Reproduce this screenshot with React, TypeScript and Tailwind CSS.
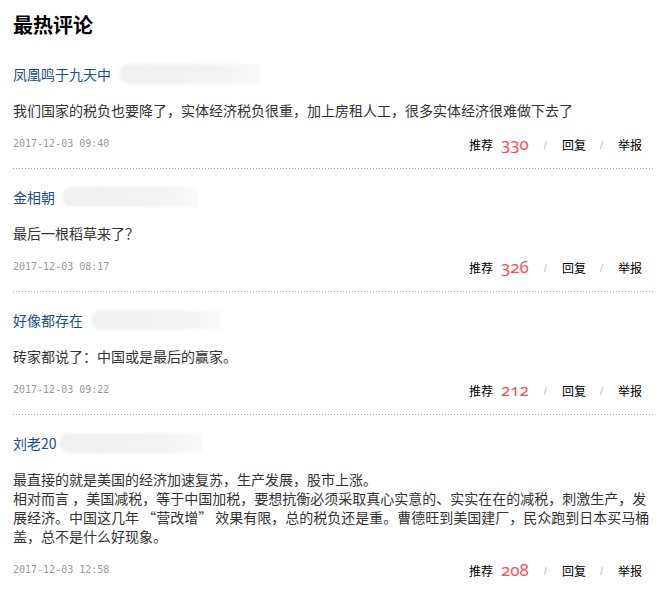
import React from "react";

type C = {
  name: string;
  blobW: number;
  blobMl: number;
  lines: string[];
  date: string;
  count: string;
};

const comments: C[] = [
  {
    name: "凤凰鸣于九天中",
    blobW: 142,
    blobMl: 8,
    lines: ["我们国家的税负也要降了，实体经济税负很重，加上房租人工，很多实体经济很难做下去了"],
    date: "2017-12-03 09:40",
    count: "330",
  },
  {
    name: "金相朝",
    blobW: 136,
    blobMl: 7,
    lines: ["最后一根稻草来了？"],
    date: "2017-12-03 08:17",
    count: "326",
  },
  {
    name: "好像都存在",
    blobW: 130,
    blobMl: 8,
    lines: ["砖家都说了：中国或是最后的赢家。"],
    date: "2017-12-03 09:22",
    count: "212",
  },
  {
    name: "刘老20",
    blobW: 144,
    blobMl: 2,
    lines: [
      "最直接的就是美国的经济加速复苏，生产发展，股市上涨。",
      "相对而言 ，美国减税，等于中国加税，要想抗衡必须采取真心实意的、实实在在的减税，刺激生产，发",
      "展经济。中国这几年 “营改增” 效果有限，总的税负还是重。曹德旺到美国建厂，民众跑到日本买马桶",
      "盖，总不是什么好现象。",
    ],
    date: "2017-12-03 12:58",
    count: "208",
  },
];

const cjk = "font-['SimSun','Noto_Sans_CJK_SC',sans-serif]";

function Comment({ c }: { c: C }) {
  return (
    <div className="flex flex-col">
      <div className="pt-[18px] flex items-center h-[38px]">
        <span className={`text-[14px] leading-[20px] text-[#1a4f82] whitespace-nowrap ${cjk}`}>{c.name}</span>
        <div
          className="h-[20px] rounded-l-full blur-[1.5px] bg-[linear-gradient(to_right,#eef1f4,#f0f0f0_30%,#f3f3f3_70%,#fafafa)]"
          style={{ width: c.blobW, marginLeft: c.blobMl }}
        />
      </div>
      <div className={`mt-[17px] text-[14px] leading-[19px] text-[#333] ${cjk}`}>
        {c.lines.map((l, i) => (
          <div key={i} className="whitespace-nowrap">
            {l}
          </div>
        ))}
      </div>
      <div className="mt-[13px] h-[24px] flex items-center justify-between pr-[11px]">
        <span className="font-['DejaVu_Sans_Mono',monospace] text-[10px] text-[#999] -mt-[4px]">{c.date}</span>
        <div className={`flex items-center text-[12px] text-black ${cjk}`}>
          <span>推荐</span>
          <span className="ml-[8px] font-['Noto_Sans',sans-serif] oldstyle-nums text-[17px] leading-[20px] text-[#ff4d55] -mt-[3px]">
            {c.count}
          </span>
          <span className="ml-[15px] text-[#bbb] font-['Liberation_Sans',sans-serif] text-[11px]">/</span>
          <span className="ml-[15px]">回复</span>
          <span className="ml-[14px] text-[#bbb] font-['Liberation_Sans',sans-serif] text-[11px]">/</span>
          <span className="ml-[15px]">举报</span>
        </div>
      </div>
      <div className="mt-[11px] h-px w-full bg-[linear-gradient(to_right,#aaa_1px,transparent_1px)] bg-[length:3px_1px]" />
    </div>
  );
}

export default function App() {
  return (
    <div className="w-[666px] h-[592px] bg-white overflow-hidden">
      <div className="pl-[13px] pr-[13px]">
        <div className={`pt-[15px] h-[46px] text-[20px] leading-[20px] font-bold text-black ${cjk}`}>最热评论</div>
        {comments.map((c, i) => (
          <Comment key={i} c={c} />
        ))}
      </div>
    </div>
  );
}
